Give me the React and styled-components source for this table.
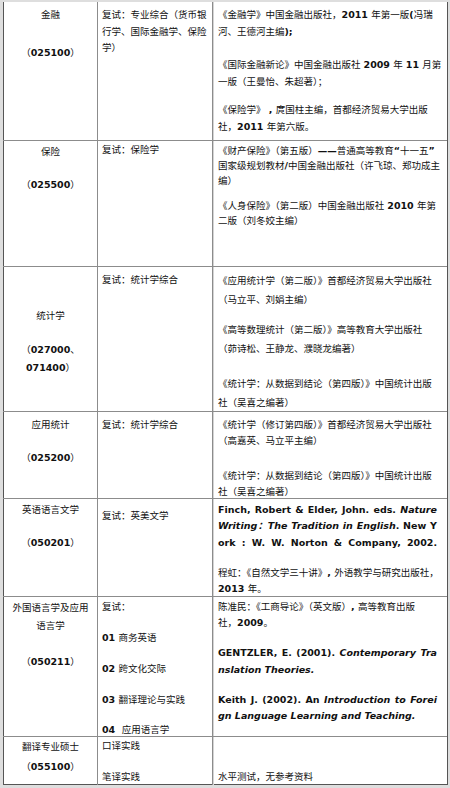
import React from 'react';
import styled, { createGlobalStyle, css } from 'styled-components';

const GlobalStyle = createGlobalStyle`
  html, body {
    margin: 0;
    padding: 0;
    background: #dedede;
  }
  body {
    font-family: "DejaVu Sans", "Noto Sans CJK SC", sans-serif;
    color: #111;
  }
`;

const Page = styled.div`
  width: 450px;
  height: 788px;
  box-sizing: border-box;
  padding: 2px 2px 0 3px;
  overflow: hidden;
`;

const Sheet = styled.div`
  width: 445px;
  display: flex;
  flex-direction: column;
  background: #fff;
  border-right: 1px solid #555;
  border-bottom: 1px solid #555;
  box-sizing: border-box;
`;

const Row = styled.div`
  display: grid;
  grid-template-columns: 94px 115px 235px;
  height: ${p => p.$h}px;
  box-sizing: border-box;
  border-top: ${p => (p.$first ? 'none' : '1px solid #8c8c8c')};
`;

const Cell = styled.div`
  box-sizing: border-box;
  font-size: 9.5px;
  line-height: ${p => p.$lh}px;
  border-left: 1px solid ${p => (p.$col === 0 ? '#555' : '#8c8c8c')};
  ${p => p.$col === 0 && css`
    padding: 0 4px;
    text-align: center;
  `}
  ${p => p.$col === 1 && css`
    padding: 0 3px 0 4px;
  `}
  ${p => p.$col === 2 && css`
    padding: 0 10px 0 5px;
    box-shadow: inset 1px 0 0 #d4d4d4;
  `}
`;

const Para = styled.div`
  margin-top: ${p => p.$gap}px;
`;

const Line = styled.span`
  display: block;
  white-space: nowrap;
  ${p => p.$justify && css`
    text-align: justify;
    text-align-last: justify;
  `}
`;

const B = styled.b`
  font-family: "DejaVu Sans", "Noto Sans CJK SC", sans-serif;
  font-weight: bold;
`;

const BI = styled.i`
  font-family: "DejaVu Sans", "Noto Sans CJK SC", sans-serif;
  font-weight: bold;
  font-style: italic;
`;

const rows = [
  {
    h: 138,
    cells: [
      { lh: 16, paras: [[5, ['金融']], [21.5, [<>（<B>025100</B>）</>]]] },
      { lh: 16.5, paras: [[5, ['复试：专业综合（货币银', '行学、国际金融学、保险', '学）']]] },
      {
        lh: 16.5,
        paras: [
          [5, [<>《金融学》中国金融出版社，<B>2011 </B>年第一版<B>(</B>冯瑞</>, <>河、王德河主编<B>);</B></>]],
          [17, [<>《国际金融新论》中国金融出版社 <B>2009 </B>年 <B>11 </B>月第</>, '一版（王曼怡、朱超著）；']],
          [12, [<>《保险学》<B> , </B>庹国柱主编，首都经济贸易大学出版</>, <>社，<B>2011 </B>年第六版。</>]],
        ],
      },
    ],
  },
  {
    h: 126,
    cells: [
      { lh: 16, paras: [[3, ['保险']], [17, [<>（<B>025500</B>）</>]]] },
      { lh: 16, paras: [[1, ['复试：保险学']]] },
      {
        lh: 15,
        paras: [
          [1.5, [<>《财产保险》（第五版）<B>——</B>普通高等教育<B>“</B>十一五<B>”</B></>, <>国家级规划教材<B>/</B>中国金融出版社（许飞琼、郑功成主</>, '编）']],
          [10, [<>《人身保险》（第二版）中国金融出版社 <B>2010 </B>年第</>, '二版（刘冬姣主编）']],
        ],
      },
    ],
  },
  {
    h: 145,
    cells: [
      { lh: 18, paras: [[40, ['统计学']], [16, [<>（<B>027000</B>、</>, <><B>071400</B>）</>]]] },
      { lh: 16, paras: [[5, ['复试：统计学综合']]] },
      {
        lh: 19,
        paras: [
          [4, ['《应用统计学（第二版）》首都经济贸易大学出版社', '（马立平、刘娟主编）']],
          [11, ['《高等数理统计（第二版）》高等教育大学出版社', '（茆诗松、王静龙、濮晓龙编著）']],
          [16, ['《统计学：从数据到结论（第四版）》中国统计出版', '社（吴喜之编著）']],
        ],
      },
    ],
  },
  {
    h: 87,
    cells: [
      { lh: 16, paras: [[5, ['应用统计']], [17, [<>（<B>025200</B>）</>]]] },
      { lh: 16, paras: [[5, ['复试：统计学综合']]] },
      {
        lh: 16.5,
        paras: [
          [4.5, ['《统计学（修订第四版）》首都经济贸易大学出版社', '（高嘉英、马立平主编）']],
          [18, ['《统计学：从数据到结论（第四版）》中国统计出版', '社（吴喜之编著）']],
        ],
      },
    ],
  },
  {
    h: 98,
    cells: [
      { lh: 16, paras: [[3, ['英语语言文学']], [16.7, [<>（<B>050201</B>）</>]]] },
      { lh: 16, paras: [[9, ['复试：英美文学']]] },
      {
        lh: 16.3,
        paras: [
          [3, [
            { j: true, t: <><B>Finch, Robert &amp; Elder, John. eds. </B><BI>Nature</BI></> },
            { j: true, t: <><BI>Writing：The Tradition in English</BI><B>. New Y</B></> },
            { j: true, t: <B>ork : W. W. Norton &amp; Company, 2002.</B> },
          ]],
          [14, [<>程虹：《自然文学三十讲》<B>, </B>外语教学与研究出版社，</>, <><B>2013 </B>年。</>]],
        ],
      },
    ],
  },
  {
    h: 140,
    cells: [
      { lh: 18, paras: [[2, ['外国语言学及应用', '语言学']], [17.7, [<>（<B>050211</B>）</>]]] },
      {
        lh: 16,
        paras: [
          [1.7, ['复试：']],
          [15, [<><B>01 </B>商务英语</>]],
          [15, [<><B>02 </B>跨文化交际</>]],
          [15, [<><B>03 </B>翻译理论与实践</>]],
          [14, [<><B>04&nbsp; </B>应用语言学</>]],
        ],
      },
      {
        lh: 16.5,
        paras: [
          [1.5, [<>陈准民：《工商导论》（英文版）<B>, </B>高等教育出版</>, <>社，<B>2009</B>。</>]],
          [13.5, [
            { j: true, t: <><B>GENTZLER, E. (2001). </B><BI>Contemporary Tra</BI></> },
            <BI>nslation Theories.</BI>,
          ]],
          [13.5, [
            { j: true, t: <><B>Keith J. (2002). An </B><BI>Introduction to Forei</BI></> },
            <BI>gn Language Learning and Teaching.</BI>,
          ]],
        ],
      },
    ],
  },
  {
    h: 48,
    cells: [
      { lh: 16, paras: [[2, ['翻译专业硕士']], [3.7, [<>（<B>055100</B>）</>]]] },
      { lh: 16, paras: [[1, ['口译实践']], [14.7, ['笔译实践']]] },
      { lh: 16, paras: [[32, ['水平测试，无参考资料']]] },
    ],
  },
];

const renderLine = (line, i) => {
  if (line && typeof line === 'object' && 'j' in line) {
    return <Line key={i} $justify>{line.t}</Line>;
  }
  return <Line key={i}>{line}</Line>;
};

export default function App() {
  return (
    <>
      <GlobalStyle />
      <Page>
        <Sheet>
          {rows.map((row, r) => (
            <Row key={r} $h={row.h} $first={r === 0}>
              {row.cells.map((cell, c) => (
                <Cell key={c} $col={c} $lh={cell.lh}>
                  {cell.paras.map(([gap, lines], p) => (
                    <Para key={p} $gap={gap}>
                      {lines.map(renderLine)}
                    </Para>
                  ))}
                </Cell>
              ))}
            </Row>
          ))}
        </Sheet>
      </Page>
    </>
  );
}
